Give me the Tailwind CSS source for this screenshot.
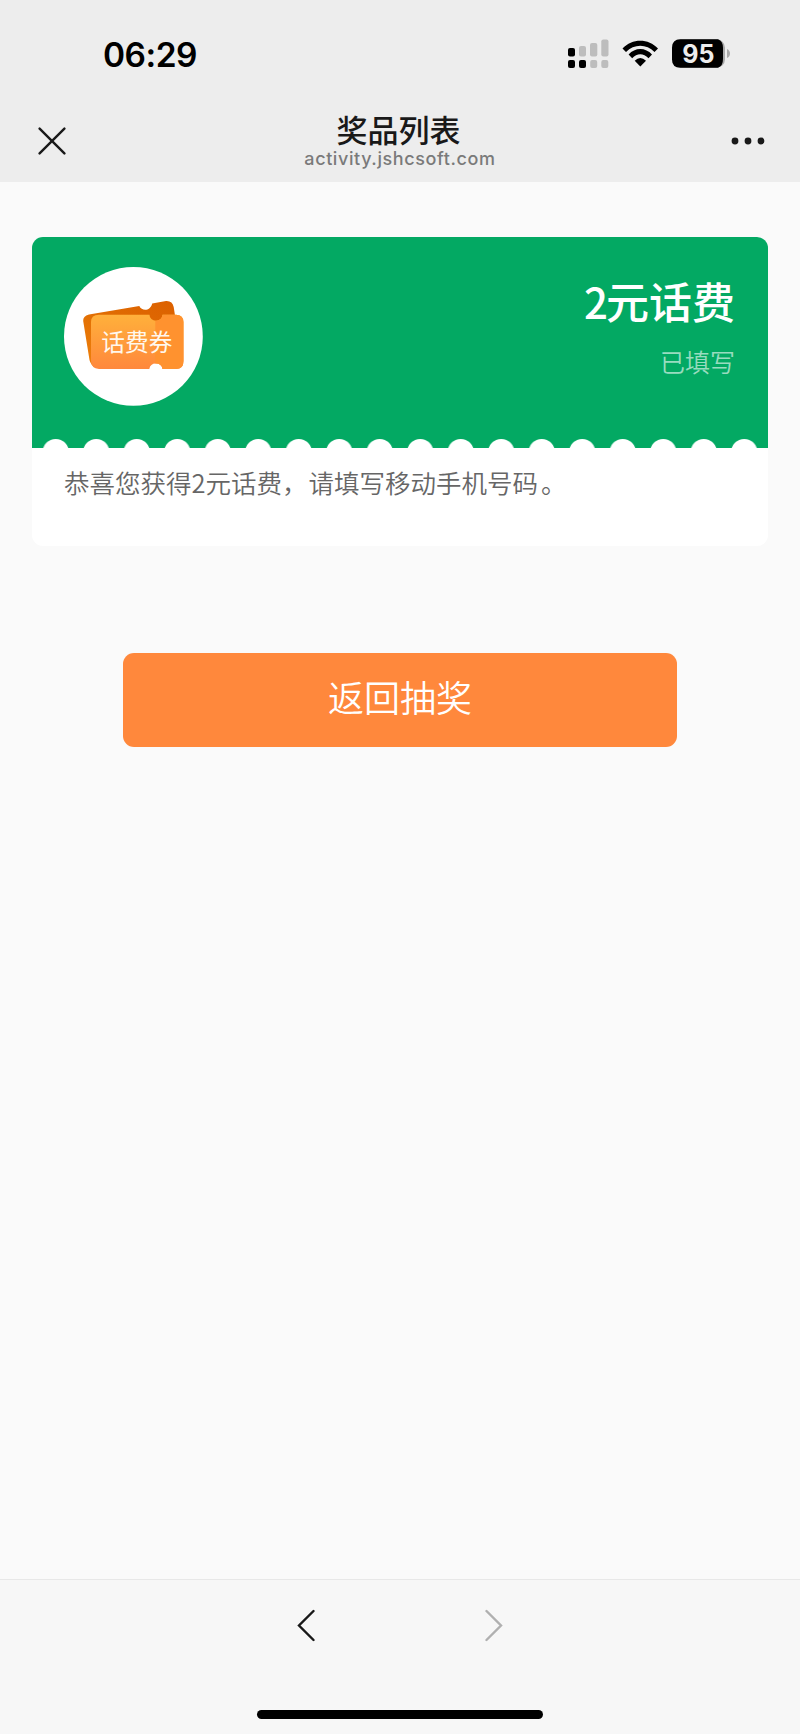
<!DOCTYPE html>
<html lang="zh-CN">
<head>
<meta charset="utf-8">
<meta name="viewport" content="width=device-width, initial-scale=1">
<title>奖品列表</title>
<script src="https://cdn.jsdelivr.net/npm/@tailwindcss/browser@4"></script>
</head>
<body class="bg-[#fafafa] font-['Inter','Noto_Sans_CJK_SC',sans-serif]">
<div class="flex h-[1734px] w-[800px] flex-col overflow-hidden">
  <header class="h-[182px] shrink-0 bg-[#ededed]">
    <div class="flex h-[100px] items-center justify-between pt-2 pl-[103px] pr-[70px]">
      <div class="pt-[2px] text-[33.5px] leading-10 font-semibold tracking-[-0.5px] text-black">06:29</div>
      <svg class="h-[30px] w-[163px]" viewBox="567 39 163 30">
        <g fill="#000"><rect x="568" y="48" width="7" height="8.5" rx="2"/><rect x="568" y="60" width="7" height="8" rx="2"/><rect x="579" y="60" width="7" height="8" rx="2"/></g>
        <g fill="#bdbdbd"><rect x="579" y="46" width="7" height="10.5" rx="2"/><rect x="590" y="43" width="7.3" height="13.5" rx="2"/><rect x="601.300" y="39.500" width="7.200" height="17" rx="2"/><rect x="590.200" y="60" width="7" height="8" rx="2"/><rect x="601.300" y="60" width="7" height="8" rx="2"/></g>
        <g fill="#000">
          <path d="M622.500 48.500C632 38 648.500 38 658 48.500L654.500 52C646.500 43.500 634 43.500 626 52Z"/>
          <path d="M628.600 54.600C635 47.200 645.500 47.200 652 54.600L648.500 58.200C643.500 53 637 53 632.200 58.200Z"/>
          <path d="M634.700 60.700Q640.300 55.500 646 60.700L640.300 66.500Z"/>
        </g>
        <rect x="672" y="39.300" width="53" height="28.500" rx="8.500" fill="#a9a9a9"/>
        <path d="M680.500 39.300H718Q723 41 723 48V59Q723 66 718 67.800H680.500Q672 67.800 672 59.300V47.800Q672 39.300 680.500 39.300Z" fill="#000"/>
        <path d="M727 49Q730 50.500 730 53.500T727 58Z" fill="#a9a9a9"/>
        <text x="698.300" y="62.700" text-anchor="middle" font-family="Inter" font-weight="700" font-size="25" fill="#ededed">95</text>
      </svg>
    </div>
    <div class="flex h-[82px] items-center justify-between pl-[38px] pr-[35px]">
      <svg class="h-[28px] w-[28px]" viewBox="0 0 28 28" fill="none" stroke="#191919" stroke-width="2.4" stroke-linecap="round"><path d="M1.600 1.600L26.400 26.400M26.400 1.600L1.600 26.400"/></svg>
      <div class="flex flex-col items-center pl-[3px]">
        <h1 class="pr-[3px] text-[31px] leading-9 font-medium text-[#191919]">奖品列表</h1>
        <p class="text-[18px] leading-5 font-medium tracking-[0.6px] text-[#7a7a7a]">activity.jshcsoft.com</p>
      </div>
      <svg class="h-[8px] w-[34px]" viewBox="0 0 34 8" fill="#191919"><circle cx="4" cy="4" r="3.400"/><circle cx="17" cy="4" r="3.400"/><circle cx="30" cy="4" r="3.400"/></svg>
    </div>
  </header>

  <main class="flex flex-1 flex-col px-8 pt-[55px]">
    <section class="h-[309px] overflow-hidden rounded-[11px] bg-white">
      <div class="flex h-[202px] justify-between bg-[#03a963] pt-[30px] pr-[33px] pl-8">
        <svg class="h-[139px] w-[139px]" viewBox="64 267 139 139">
          <defs>
            <linearGradient id="front" x1="0" y1="0" x2="0" y2="1"><stop offset="0" stop-color="#ffb13b"/><stop offset="1" stop-color="#ff873c"/></linearGradient>
            <linearGradient id="back" x1="0" y1="1" x2="1" y2="0"><stop offset="0" stop-color="#ef820c"/><stop offset=".5" stop-color="#e06c02"/><stop offset="1" stop-color="#dc6000"/></linearGradient>
            <clipPath id="ticket"><path d="M99 314.700H149.500A6.500 6 0 0 0 162.500 314.700H176Q183.500 315 183.500 322V361Q183.500 369 176 369H162.500A6.700 6.700 0 0 0 149.300 369H99Q91 368 91 361V322Q91 314.700 99 314.700Z"/></clipPath>
          </defs>
          <circle cx="133.400" cy="336.400" r="69.400" fill="#fff"/>
          <path d="M89 314.500L139.300 305.900C142 311.500 150.500 311 152.200 303.400L166 300.900Q172.500 300.500 173.700 307L176 322L166 340L96 368Q90.500 365 89.500 360L83.200 321Q82.800 316 89 314.500Z" fill="url(#back)"/>
          <g clip-path="url(#ticket)"><rect x="91" y="314" width="93" height="56" fill="url(#front)"/><rect x="155.300" y="314" width="29" height="56" fill="#ff922f"/></g>
          <text x="136.800" y="351" text-anchor="middle" font-family="Noto Sans CJK SC" font-size="23.700" fill="#fff8ed">话费券</text>
        </svg>
        <div class="flex flex-col items-end pt-2 text-white">
          <h2 class="text-[43px] leading-[52px] font-medium"><span class="mr-[-2px] inline-block font-['Noto_Sans_CJK_SC'] text-[42px] leading-[52px] font-medium">2</span>元话费</h2>
          <p class="mt-[18px] text-[25px] leading-8 font-[350] text-white/60">已填写</p>
        </div>
      </div>
      <svg class="block h-[9px] w-[736px]" viewBox="0 0 736 9">
        <defs><pattern id="scallop" x="3.500" y="0" width="40.500" height="9" patternUnits="userSpaceOnUse"><circle cx="20.250" cy="13.200" r="13.200" fill="#fff"/></pattern></defs>
        <rect width="736" height="9" fill="#03a963"/><rect x="3.500" width="729" height="9" fill="url(#scallop)"/>
      </svg>
      <p class="px-8 pt-[16px] font-['Noto_Sans_CJK_SC'] text-[25.5px] leading-9 font-[350] text-[#666]">恭喜您获得2元话费，<span class="ml-px">请填写移动手机号码</span><span class="ml-[3px]">。</span></p>
    </section>
    <button class="mt-[107px] h-[94px] w-[554px] self-center rounded-[11px] bg-[#ff883c] pb-[2px] text-[36px] leading-[50px] font-[350] text-white">返回抽奖</button>
  </main>

  <nav class="flex h-[155px] shrink-0 flex-col items-center border-t border-[#e8e8e8] bg-[#f7f7f7] pt-[29px]">
    <div class="flex w-[206px] justify-between">
      <svg class="h-[33px] w-[18px]" viewBox="0 0 18 33" fill="none" stroke="#191919" stroke-width="2.400" stroke-linecap="round"><path d="M16.500 2L2 16.500L16.500 31"/></svg>
      <svg class="h-[33px] w-[18px]" viewBox="0 0 18 33" fill="none" stroke="#b0b0b0" stroke-width="2.400" stroke-linecap="round"><path d="M1.500 2L16 16.500L1.500 31"/></svg>
    </div>
    <div class="mt-[68px] h-[9px] w-[286px] rounded-full bg-black"></div>
  </nav>
</div>
</body>
</html>
